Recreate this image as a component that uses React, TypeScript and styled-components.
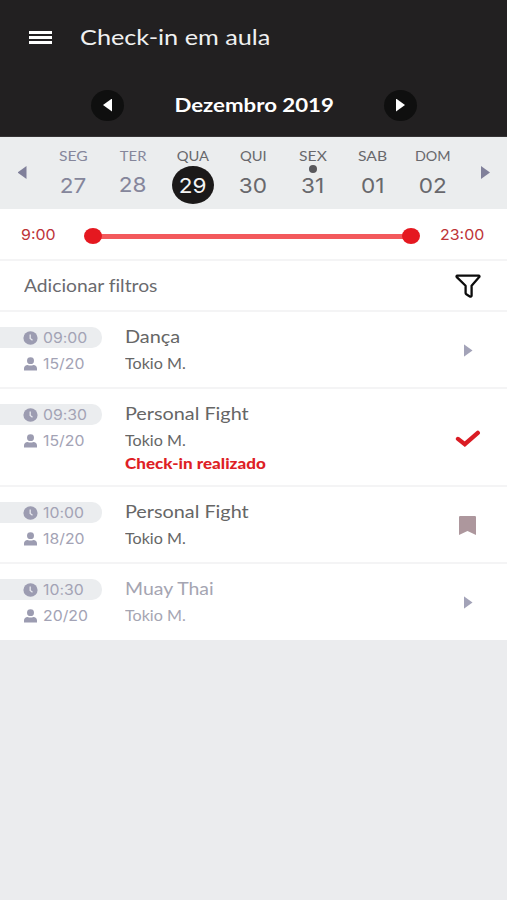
import React from 'react';
import styled, { createGlobalStyle, css } from 'styled-components';

const LETTERS = "Lato, 'Open Sans', sans-serif";
const DIGITS = "Inter, 'Open Sans', sans-serif";

const GlobalStyle = createGlobalStyle`
  * { box-sizing: border-box; }
  body { margin: 0; background: #ebecee; }
`;

type Origin = 'left' | 'center';

/* Single line of type drawn with wide letterforms. */
const Wide = styled.span<{ $stretch: number; $origin?: Origin }>`
  display: block;
  width: max-content;
  white-space: nowrap;
  font-variant-ligatures: none;
  transform: scaleX(${(p) => p.$stretch});
  transform-origin: ${(p) => p.$origin ?? 'left'} center;
`;

const Screen = styled.main`
  display: flex;
  flex-direction: column;
  width: 507px;
  height: 900px;
  overflow: hidden;
  background: #ebecee;
  font-family: ${LETTERS};
`;

const Header = styled.header`
  height: 137px;
  flex: none;
  background: #222021;
  border-bottom: 1px solid #353334;
`;

const TitleBar = styled.div`
  display: flex;
  align-items: center;
  height: 74px;
  padding-left: 29px;
  gap: 28px;
`;

const MenuButton = styled.button`
  display: flex;
  flex-direction: column;
  gap: 2px;
  width: 23px;
  padding: 0;
  border: 0;
  background: none;
`;

const MenuBar = styled.i`
  height: 3px;
  background: #fff;
`;

const Title = styled(Wide).attrs({ as: 'h1' })`
  margin: 0;
  font-size: 21px;
  font-weight: 400;
  line-height: 26px;
  color: #f0f0f0;
`;

const MonthBar = styled.div`
  display: flex;
  align-items: center;
  justify-content: space-between;
  height: 62px;
  padding: 0 90px 0 91px;
`;

const RoundButton = styled.button`
  display: grid;
  place-items: center;
  width: 33px;
  height: 31px;
  padding: 0;
  border: 0;
  border-radius: 50%;
  background: #0f0f0f;
`;

const Month = styled(Wide).attrs({ as: 'h2' })`
  margin: 0;
  font-size: 19px;
  font-weight: 700;
  line-height: 24px;
  color: #fff;
`;

const Triangle = styled.i<{ $dir: 'left' | 'right'; $color: string }>`
  display: block;
  width: 9px;
  height: 13px;
  background: ${(p) => p.$color};
  clip-path: ${(p) =>
    p.$dir === 'left' ? 'polygon(100% 0, 100% 100%, 0 50%)' : 'polygon(0 0, 100% 50%, 0 100%)'};
`;

const WeekStrip = styled.nav`
  display: grid;
  grid-template-columns: 43px repeat(7, 60px) 44px;
  height: 72px;
  flex: none;
  background: #ebedee;
`;

const WeekArrow = styled.button`
  display: flex;
  justify-content: center;
  padding: 29px 0 0 1px;
  border: 0;
  background: none;
`;

const Day = styled.div<{ $muted?: boolean }>`
  position: relative;
  display: flex;
  flex-direction: column;
  align-items: center;
  padding-top: 11px;
  color: ${(p) => (p.$muted ? '#85869b' : '#68686c')};
`;

const Weekday = styled(Wide)`
  font-size: 13.5px;
  line-height: 16px;
`;

const DayNumber = styled.div<{ $selected?: boolean; $raised?: boolean }>`
  display: grid;
  place-items: center;
  width: 42px;
  height: 38px;
  margin-top: ${(p) => (p.$raised ? 1 : 2)}px;
  border-radius: 50%;
  font: 400 20.5px ${DIGITS};
  ${(p) =>
    p.$selected &&
    css`
      background: #1b1919;
      color: #f4f4f4;
    `}
`;

const EventDot = styled.i`
  position: absolute;
  top: 28px;
  left: 26px;
  width: 8px;
  height: 8px;
  border-radius: 50%;
  background: #58585c;
`;

const Panel = styled.section`
  flex: none;
  background: #fff;
`;

const RangeRow = styled.div`
  display: flex;
  align-items: center;
  height: 52px;
  padding: 2px 0 0 21px;
  border-bottom: 2px solid #f4f4f5;
`;

const RangeTime = styled(Wide)`
  flex: none;
  width: 39px;
  font: 400 14.5px/20px ${DIGITS};
  color: #bd3438;
`;

const Track = styled.div`
  display: flex;
  flex: none;
  align-items: center;
  justify-content: space-between;
  width: 336px;
  height: 17px;
  margin: 2px 20px 0 24px;
  background: linear-gradient(#f3595c, #f3595c) center / 318px 5px no-repeat;
`;

const Knob = styled.i`
  width: 18px;
  height: 16px;
  border-radius: 50%;
  background: #e51820;
`;

const FilterRow = styled.div`
  display: flex;
  align-items: center;
  justify-content: space-between;
  height: 51px;
  padding: 0 26px 0 24px;
  border-bottom: 2px solid #f4f4f5;
`;

const FilterLabel = styled(Wide)`
  font-size: 17px;
  line-height: 22px;
  color: #6a6a6e;
`;

const ClassRow = styled.article<{ $height: number; $last?: boolean; $muted?: boolean }>`
  display: grid;
  grid-template-columns: 124.5px 1fr 78px;
  height: ${(p) => p.$height}px;
  padding-top: 15px;
  border-bottom: ${(p) => (p.$last ? 0 : 2)}px solid #f4f4f5;
  color: ${(p) => (p.$muted ? '#a5a5b2' : '#666')};
`;

const Meta = styled.div`
  display: flex;
  flex-direction: column;
  gap: 5px;
  color: #a3a3b5;
  font: 400 14px/21px ${DIGITS};
`;

const MetaLine = styled.div<{ $pill?: boolean }>`
  display: flex;
  align-items: center;
  gap: 5px;
  width: 102px;
  height: 21px;
  padding-left: 23px;
  border-radius: 0 10px 10px 0;
  background: ${(p) => (p.$pill ? '#ebedef' : 'transparent')};
`;

const ClassName = styled(Wide).attrs({ as: 'h3' })`
  margin: 0;
  font-size: 17px;
  font-weight: 400;
  line-height: 20px;
`;

const Teacher = styled(Wide)`
  margin-top: 7px;
  font-size: 14.5px;
  line-height: 20px;
`;

const Status = styled(Wide)`
  margin-top: 4px;
  font-size: 14.5px;
  font-weight: 900;
  line-height: 18px;
  color: #de1f26;
`;

const Action = styled.div<{ $top: number }>`
  display: flex;
  justify-content: center;
  align-items: flex-start;
  padding-top: ${(p) => p.$top}px;
`;

const ClockIcon = () => (
  <svg width="15" height="14" viewBox="0 0 15 14">
    <ellipse cx="7.5" cy="7" rx="7.1" ry="6.7" fill="#9c9cb1" />
    <path d="M7.2 3.4v4l2.3 1.8" fill="none" stroke="#e8e9ee" strokeWidth="1.3" />
  </svg>
);

const PersonIcon = () => (
  <svg width="15" height="14" viewBox="0 0 15 14">
    <ellipse cx="7.5" cy="3.7" rx="3.5" ry="3.4" fill="#9c9cb1" />
    <path d="M1 13.4v-2C1 9.3 2.5 8 4.6 8c1.9 .7 3.9 .7 5.8 0 2.1 0 3.6 1.3 3.6 3.4v2z" fill="#9c9cb1" />
  </svg>
);

const FunnelIcon = () => (
  <svg width="26" height="24" viewBox="0 0 26 24">
    <path
      d="M2.4 1.6h21.2c.9 0 1.1.9.6 1.5l-7.6 8.600v9.700c0 1.100-.9 1.500-1.800 1l-3.500-2.100c-.5-.3-.7-.6-.7-1.200v-7.400L1.800 3.100c-.5-.6-.3-1.500.6-1.500z"
      fill="none"
      stroke="#0c0c0c"
      strokeWidth="2.3"
      strokeLinejoin="round"
    />
  </svg>
);

const CheckIcon = () => (
  <svg width="26" height="18" viewBox="0 0 26 18">
    <path d="M3 8.900l6.800 5.300L22.800 2.900" fill="none" stroke="#da1c24" strokeWidth="4.3" strokeLinecap="round" strokeLinejoin="miter" />
  </svg>
);

const BookmarkIcon = () => (
  <svg width="19" height="19" viewBox="0 0 19 19">
    <path d="M.8 0h15.4l.8.8V19l-8.500-4L0 19V.8z" fill="#ad979d" />
  </svg>
);

const days = [
  { name: 'SEG', number: '27', nameStretch: 1.16, muted: true },
  { name: 'TER', number: '28', nameStretch: 1.1, muted: true, raised: true },
  { name: 'QUA', number: '29', nameStretch: 1.09, selected: true },
  { name: 'QUI', number: '30', nameStretch: 1.09 },
  { name: 'SEX', number: '31', nameStretch: 1.16, event: true },
  { name: 'SAB', number: '01', nameStretch: 1.16 },
  { name: 'DOM', number: '02', nameStretch: 1.06 },
];

type Kind = 'open' | 'checked' | 'saved';

const classes: {
  time: string; seats: string; name: string; stretch: number;
  height: number; top: number; kind: Kind; status?: string; full?: boolean;
}[] = [
  { time: '09:00', seats: '15/20', name: 'Dança', stretch: 1.17, height: 77, top: 17, kind: 'open' },
  { time: '09:30', seats: '15/20', name: 'Personal Fight', stretch: 1.165, height: 98, top: 26, kind: 'checked', status: 'Check-in realizado' },
  { time: '10:00', seats: '18/20', name: 'Personal Fight', stretch: 1.165, height: 77, top: 14, kind: 'saved' },
  { time: '10:30', seats: '20/20', name: 'Muay Thai', stretch: 1.145, height: 75.5, top: 17, kind: 'open', full: true },
];

const ActionIcon = ({ kind }: { kind: Kind }) => {
  if (kind === 'checked') return <CheckIcon />;
  if (kind === 'saved') return <BookmarkIcon />;
  return <Triangle $dir="right" $color="#a3a3b8" />;
};

export default function App() {
  return (
    <Screen>
      <GlobalStyle />
      <Header>
        <TitleBar>
          <MenuButton aria-label="Menu">
            <MenuBar />
            <MenuBar />
            <MenuBar />
          </MenuButton>
          <Title $stretch={1.203}>Check-in em aula</Title>
        </TitleBar>
        <MonthBar>
          <RoundButton aria-label="Mês anterior">
            <Triangle $dir="left" $color="#fff" />
          </RoundButton>
          <Month $stretch={1.17} $origin="center">Dezembro 2019</Month>
          <RoundButton aria-label="Próximo mês">
            <Triangle $dir="right" $color="#fff" />
          </RoundButton>
        </MonthBar>
      </Header>

      <WeekStrip>
        <WeekArrow aria-label="Semana anterior">
          <Triangle $dir="left" $color="#80809a" />
        </WeekArrow>
        {days.map((d) => (
          <Day key={d.name} $muted={d.muted}>
            <Weekday $stretch={d.nameStretch} $origin="center">{d.name}</Weekday>
            {d.event && <EventDot />}
            <DayNumber $selected={d.selected} $raised={d.raised}>
              <Wide $stretch={1.1} $origin="center">{d.number}</Wide>
            </DayNumber>
          </Day>
        ))}
        <WeekArrow aria-label="Próxima semana">
          <Triangle $dir="right" $color="#80809a" />
        </WeekArrow>
      </WeekStrip>

      <Panel>
        <RangeRow>
          <RangeTime $stretch={1.1}>9:00</RangeTime>
          <Track>
            <Knob />
            <Knob />
          </Track>
          <RangeTime $stretch={1.1}>23:00</RangeTime>
        </RangeRow>
        <FilterRow>
          <FilterLabel $stretch={1.132}>Adicionar filtros</FilterLabel>
          <FunnelIcon />
        </FilterRow>
        {classes.map((c, i) => (
          <ClassRow key={c.time} $height={c.height} $last={i === classes.length - 1} $muted={c.full}>
            <Meta>
              <MetaLine $pill>
                <ClockIcon />
                <Wide $stretch={1.13}>{c.time}</Wide>
              </MetaLine>
              <MetaLine>
                <PersonIcon />
                <Wide $stretch={1.13}>{c.seats}</Wide>
              </MetaLine>
            </Meta>
            <div>
              <ClassName $stretch={c.stretch}>{c.name}</ClassName>
              <Teacher $stretch={1.11}>Tokio M.</Teacher>
              {c.status && <Status $stretch={1.175}>{c.status}</Status>}
            </div>
            <Action $top={c.top}>
              <ActionIcon kind={c.kind} />
            </Action>
          </ClassRow>
        ))}
      </Panel>
    </Screen>
  );
}
